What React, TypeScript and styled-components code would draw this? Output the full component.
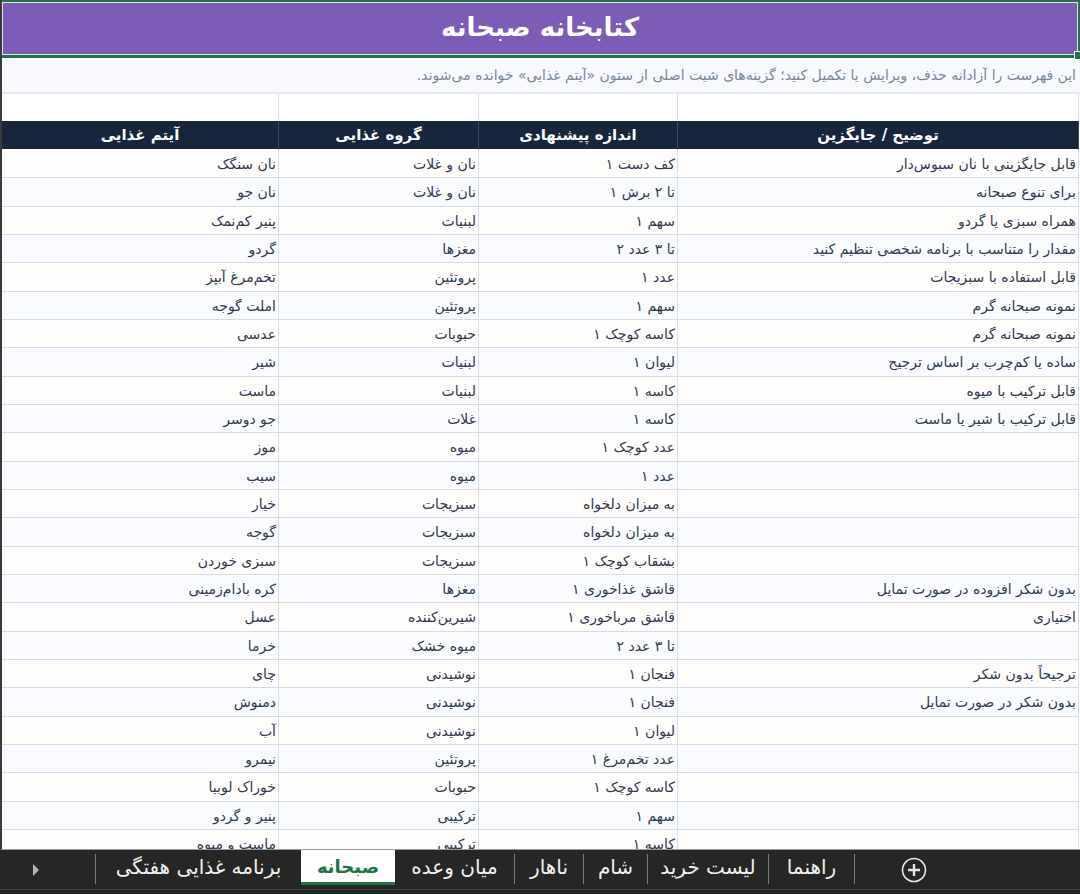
import React from "react";
import styled, { createGlobalStyle } from "styled-components";

const GlobalStyle = createGlobalStyle`
  * { box-sizing: border-box; }
  body { margin: 0; background: #262626; }
`;

const Workbook = styled.main`
  display: flex;
  flex-direction: column;
  height: 100vh;
  font-family: "DejaVu Sans", sans-serif;
`;

const Sheet = styled.section`
  flex: 1;
  min-height: 0;
  overflow: hidden;
  border-left: 2px solid #3a3a3a;
  border-bottom: 1px solid #9a9a9a;
  background: #fff;
`;

const TitleCell = styled.header`
  position: relative;
  height: 58px;
  margin-left: -2px;
  border: 2px solid #217346;
  border-bottom-width: 3px;
  padding: 1px;
  background: #e6e3ef;
`;

const Title = styled.h1`
  margin: 0;
  height: 51px;
  background: #7c5cb7;
  color: #fff;
  font-size: 26px;
  line-height: 48px;
  font-weight: 700;
  text-align: center;
`;

const FillHandle = styled.span`
  position: absolute;
  right: -2px;
  bottom: -4px;
  width: 6px;
  height: 8px;
  background: #217346;
  border: solid #fff;
  border-width: 1px 0 0 1px;
`;

const Note = styled.p`
  margin: 0;
  height: 36px;
  padding: 0 4px;
  border-bottom: 2px solid #e4e9f0;
  background: #f7f9fd;
  color: #7b869b;
  font-size: 14px;
  line-height: 34px;
  text-align: right;
  white-space: nowrap;
`;

const Table = styled.table`
  width: calc(100% - 1px);
  table-layout: fixed;
  border-collapse: separate;
  border-spacing: 0;
`;

const Col = styled.col<{ $w?: number }>`
  width: ${(p) => (p.$w ? p.$w + "px" : "auto")};
`;

const SpacerCell = styled.td`
  height: 27px;
  padding: 0;
  border-right: 1px solid #d9d9dc;
`;

const HeadCell = styled.th`
  height: 29px;
  padding: 0;
  border-right: 1px solid #3b485c;
  border-bottom: 1px solid #fefdfc;
  background: #17263d;
  color: #fff;
  font-size: 15px;
  line-height: 26px;
  font-weight: 700;
  text-align: center;
`;

const Row = styled.tr`
  height: 28px;
  background: #fefdfc;
  &:nth-child(even) { background: #f9fbfe; }
  &:nth-child(3n + 2) { height: 29px; }
`;

const Cell = styled.td`
  padding: 0 2px 0 0;
  border-right: 1px solid #dbe0e8;
  border-bottom: 1px solid #d5dce5;
  color: #303a50;
  font-size: 14px;
  line-height: 26px;
  text-align: right;
  white-space: nowrap;
`;

const TabBar = styled.nav`
  display: flex;
  align-items: flex-start;
  height: 39px;
  background: #262626;
`;

const Scroll = styled.button`
  width: 95px;
  height: 39px;
  padding: 0 0 0 32px;
  border: 0;
  background: none;
  text-align: left;
  line-height: 0;
`;

const Divider = styled.span`
  width: 1px;
  height: 30px;
  margin-top: 4px;
  background: #7a7a7a;
`;

const Tab = styled.button<{ $w: number; $active?: boolean }>`
  width: ${(p) => p.$w}px;
  height: 35px;
  padding: 2px 0 0;
  border: 0;
  border-bottom: 3px solid ${(p) => (p.$active ? "#217346" : "transparent")};
  background: ${(p) => (p.$active ? "#fff" : "transparent")};
  color: ${(p) => (p.$active ? "#217346" : "#f0f0f0")};
  font-family: "DejaVu Sans", sans-serif;
  font-size: ${(p) => (p.$active ? 18 : 20)}px;
  font-weight: ${(p) => (p.$active ? 700 : 400)};
  line-height: 30px;
  white-space: nowrap;
`;

const AddButton = styled.button`
  margin-left: 46px;
  margin-top: 7px;
  padding: 0;
  border: 0;
  background: none;
  line-height: 0;
`;

const StatusEdge = styled.footer`
  height: 5px;
  border-top: 1px solid #404040;
  background: #222;
`;

const rows: string[][] = [
  ["نان سنگک", "نان و غلات", "۱ کف دست", "قابل جایگزینی با نان سبوس‌دار"],
  ["نان جو", "نان و غلات", "۱ تا ۲ برش", "برای تنوع صبحانه"],
  ["پنیر کم‌نمک", "لبنیات", "۱ سهم", "همراه سبزی یا گردو"],
  ["گردو", "مغزها", "۲ تا ۳ عدد", "مقدار را متناسب با برنامه شخصی تنظیم کنید"],
  ["تخم‌مرغ آبپز", "پروتئین", "۱ عدد", "قابل استفاده با سبزیجات"],
  ["املت گوجه", "پروتئین", "۱ سهم", "نمونه صبحانه گرم"],
  ["عدسی", "حبوبات", "۱ کاسه کوچک", "نمونه صبحانه گرم"],
  ["شیر", "لبنیات", "۱ لیوان", "ساده یا کم‌چرب بر اساس ترجیح"],
  ["ماست", "لبنیات", "۱ کاسه", "قابل ترکیب با میوه"],
  ["جو دوسر", "غلات", "۱ کاسه", "قابل ترکیب با شیر یا ماست"],
  ["موز", "میوه", "۱ عدد کوچک", ""],
  ["سیب", "میوه", "۱ عدد", ""],
  ["خیار", "سبزیجات", "به میزان دلخواه", ""],
  ["گوجه", "سبزیجات", "به میزان دلخواه", ""],
  ["سبزی خوردن", "سبزیجات", "۱ بشقاب کوچک", ""],
  ["کره بادام‌زمینی", "مغزها", "۱ قاشق غذاخوری", "بدون شکر افزوده در صورت تمایل"],
  ["عسل", "شیرین‌کننده", "۱ قاشق مرباخوری", "اختیاری"],
  ["خرما", "میوه خشک", "۲ تا ۳ عدد", ""],
  ["چای", "نوشیدنی", "۱ فنجان", "ترجیحاً بدون شکر"],
  ["دمنوش", "نوشیدنی", "۱ فنجان", "بدون شکر در صورت تمایل"],
  ["آب", "نوشیدنی", "۱ لیوان", ""],
  ["نیمرو", "پروتئین", "۱ عدد تخم‌مرغ", ""],
  ["خوراک لوبیا", "حبوبات", "۱ کاسه کوچک", ""],
  ["پنیر و گردو", "ترکیبی", "۱ سهم", ""],
  ["ماست و میوه", "ترکیبی", "۱ کاسه", ""],
];

const headers = ["آیتم غذایی", "گروه غذایی", "اندازه پیشنهادی", "توضیح / جایگزین"];

const tabs = [
  { label: "برنامه غذایی هفتگی", w: 205 },
  { label: "صبحانه", w: 94, active: true },
  { label: "میان وعده", w: 119, divider: true },
  { label: "ناهار", w: 68, divider: true },
  { label: "شام", w: 63, divider: true },
  { label: "لیست خرید", w: 120, divider: true },
  { label: "راهنما", w: 85, divider: true },
];

export default function App() {
  return (
    <Workbook lang="fa">
      <GlobalStyle />
      <Sheet>
        <TitleCell>
          <Title dir="rtl">کتابخانه صبحانه</Title>
          <FillHandle />
        </TitleCell>
        <Note dir="rtl">
          این فهرست را آزادانه حذف، ویرایش یا تکمیل کنید؛ گزینه‌های شیت اصلی از ستون «آیتم غذایی» خوانده می‌شوند.
        </Note>
        <Table>
          <colgroup>
            <Col $w={277} />
            <Col $w={200} />
            <Col $w={199} />
            <Col />
          </colgroup>
          <thead>
            <tr>{headers.map((h) => <SpacerCell key={h} />)}</tr>
            <tr>{headers.map((h) => <HeadCell key={h} scope="col">{h}</HeadCell>)}</tr>
          </thead>
          <tbody>
            {rows.map((r, i) => (
              <Row key={i}>{r.map((c, j) => <Cell key={j}>{c}</Cell>)}</Row>
            ))}
          </tbody>
        </Table>
      </Sheet>
      <TabBar>
        <Scroll type="button" aria-label="بعدی">
          <svg width="8" height="12" viewBox="0 0 8 12"><path d="M1 0 L7 6 L1 12 Z" fill="#b4b4b4" /></svg>
        </Scroll>
        <Divider />
        {tabs.map((t) => (
          <React.Fragment key={t.label}>
            <Tab type="button" dir="rtl" $w={t.w} $active={t.active}>{t.label}</Tab>
            {t.divider && <Divider />}
          </React.Fragment>
        ))}
        <AddButton type="button" aria-label="برگه جدید">
          <svg width="26" height="26" viewBox="0 0 26 26" fill="none" stroke="#e6e6e6">
            <circle cx="13" cy="13" r="11.5" strokeWidth="1.6" />
            <path d="M13 7v12M7 13h12" strokeWidth="2.4" />
          </svg>
        </AddButton>
      </TabBar>
      <StatusEdge />
    </Workbook>
  );
}
